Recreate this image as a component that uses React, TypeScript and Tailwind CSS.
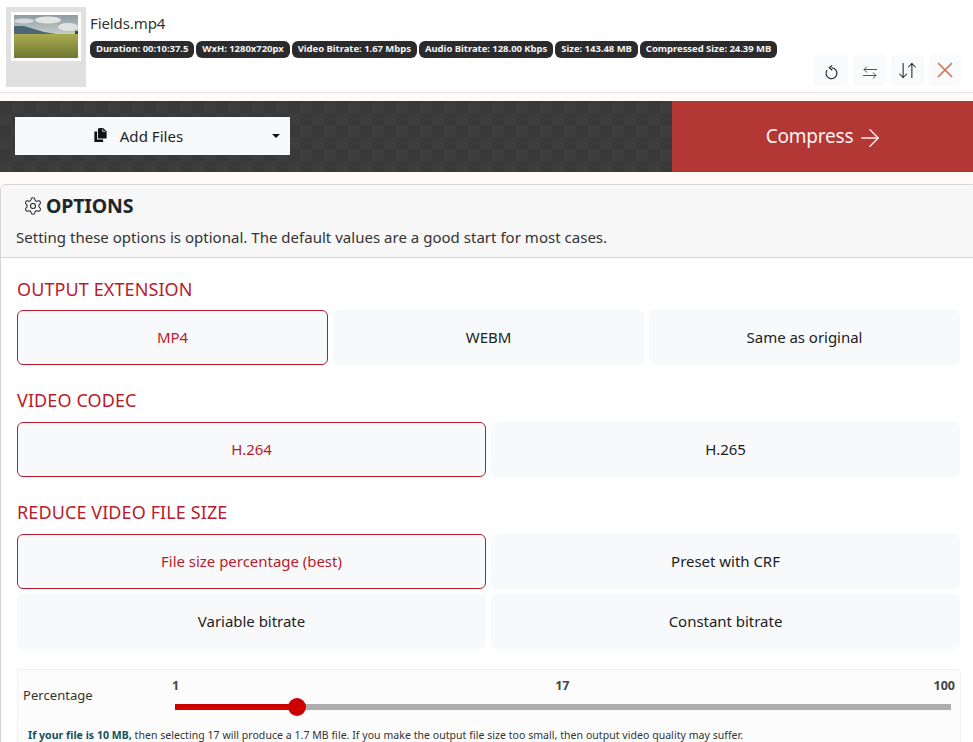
import React from "react";
import { ArrowDownUp, X, ArrowRight, Settings } from "lucide-react";

const font = { fontFamily: '"Noto Sans", "Open Sans", sans-serif' };

function Badge({ children }: { children: React.ReactNode }) {
  return (
    <span className="flex h-[17px] items-center whitespace-nowrap rounded-[6px] bg-[#2b2b2d] px-[6px] text-[9.5px] font-bold tracking-[-0.04px] text-[#f4f4f4]">
      {children}
    </span>
  );
}

function IconBtn({ children, w }: { children: React.ReactNode; w: string }) {
  return <button className={`flex h-[31px] ${w} items-center justify-center rounded-[4px] bg-[#f9fafb]`}>{children}</button>;
}

function Option({ label, active }: { label: string; active?: boolean }) {
  return (
    <div
      className={`flex h-[55px] flex-1 items-center justify-center rounded-[6px] border bg-[#f8f9fa] text-[15px] tracking-[-0.03px] ${
        active ? "border-[#b81c2b] text-[#b81c2b]" : "border-[#f8f9fa] text-[#1d1d1d]"
      }`}
    >
      {label}
    </div>
  );
}

function Heading({ children }: { children: React.ReactNode }) {
  return <div className="text-[18px] leading-[24px] tracking-[0.1px] text-[#b81c2b]">{children}</div>;
}

export default function App() {
  return (
    <div style={font} className="h-[742px] w-[973px] overflow-hidden bg-[#fffaf7] text-[#212529]">
      <div className="flex h-[93px] border-b border-[#e6e4e2] bg-white pl-[6px] pt-[7px]">
        <div className="h-[80px] w-[80px] bg-[#e0e0e0] pl-[5px] pt-[5px]">
          <div className="h-[49px] w-[70px] bg-white p-[3px]">
            <svg viewBox="0 0 64 43" className="block h-[43px] w-[64px]" preserveAspectRatio="none">
              <defs>
                <linearGradient id="sky" x1="0" y1="0" x2="0" y2="1">
                  <stop offset="0" stopColor="#8c9da3" />
                  <stop offset="1" stopColor="#c9cecb" />
                </linearGradient>
                <linearGradient id="field" x1="0" y1="0" x2="0" y2="1">
                  <stop offset="0" stopColor="#abab4f" />
                  <stop offset="1" stopColor="#6e7833" />
                </linearGradient>
              </defs>
              <rect width="64" height="20" fill="url(#sky)" />
              <ellipse cx="34" cy="5" rx="13" ry="3.5" fill="#e3e5e1" />
              <ellipse cx="10" cy="6" rx="10" ry="2.5" fill="#d5d9d7" />
              <ellipse cx="54" cy="12" rx="10" ry="4" fill="#e0e2de" />
              <path d="M0 11 L10 11 L20 14 L30 17 L42 19 L64 19 L64 21 L0 21 Z" fill="#4d6675" />
              <rect x="61" y="16" width="3" height="4" fill="#3f4a36" />
              <rect y="19" width="64" height="24" fill="url(#field)" />
            </svg>
          </div>
        </div>
        <div className="ml-[4px] flex min-w-0 flex-1 flex-col">
          <div className="mt-[4px] text-[15px] leading-[24px] tracking-[-0.1px] text-[#333]">Fields.mp4</div>
          <div className="mt-[6px] flex gap-[2px]">
            <Badge>Duration: 00:10:37.5</Badge>
            <Badge>WxH: 1280x720px</Badge>
            <Badge>Video Bitrate: 1.67 Mbps</Badge>
            <Badge>Audio Bitrate: 128.00 Kbps</Badge>
            <Badge>Size: 143.48 MB</Badge>
            <Badge>Compressed Size: 24.39 MB</Badge>
          </div>
          <div className="mt-[-3px] flex justify-end gap-[5px] pr-[12px]">
            <IconBtn w="w-[34px]">
              <svg viewBox="0 0 16 16" className="mt-[4px] h-[15px] w-[15px]" fill="none" stroke="#222" strokeWidth="1.2">
                <path d="M8 3 A5.8 5.8 0 1 1 3.2 5.5" />
                <path d="M8.8 0.4 L5.6 3 L8.8 5.6" />
              </svg>
            </IconBtn>
            <IconBtn w="w-[33px]">
              <svg viewBox="0 0 14 13" className="mt-[3px] h-[13px] w-[14px]" fill="none" stroke="#555" strokeWidth="1">
                <path d="M4 0.5 L1 3.5 L4 6.5 M1 3.5 H14" />
                <path d="M10 6.5 L13 9.5 L10 12.5 M0 9.5 H13" />
              </svg>
            </IconBtn>
            <IconBtn w="w-[33px]"><ArrowDownUp size={21} strokeWidth={1.2} color="#222" /></IconBtn>
            <IconBtn w="w-[32px]"><X size={26} strokeWidth={1.6} color="#c87a60" className="mt-[-2px]" /></IconBtn>
          </div>
        </div>
      </div>

      <div className="mt-[8px] flex h-[71px]">
        <div className="flex-1 bg-[#3b3b3b] bg-[conic-gradient(#3d3d3d_25%,#393939_0_50%,#3d3d3d_0_75%,#393939_0)] bg-[length:24px_24px] pl-[15px] pt-[16px]">
          <button className="relative flex h-[38px] w-[275px] items-center justify-center bg-[#f8f9fa] pr-[28px] text-[15px] tracking-[0.05px] text-[#212529]">
            <svg viewBox="0 0 14 16" className="mr-[13px] mt-[-2px] h-[14px] w-[13px]" fill="#111">
              <path d="M6 0h4l4 4v8H4V2a2 2 0 0 1 2-2z" />
              <path d="M0 4h3v9h7v3H0z" />
              <path d="M9.5 1v3h3" fill="none" stroke="#fff" strokeWidth="0.8" />
            </svg>
            Add Files
            <span className="absolute right-[10px] top-[17px] h-0 w-0 border-x-[4px] border-t-[4px] border-x-transparent border-t-[#111]" />
          </button>
        </div>
        <div className="flex w-[301px] items-center justify-center bg-[#b23735] pl-[5px] text-[19px] tracking-[-0.2px] text-[#fdf3f2]">
          Compress
          <ArrowRight size={28} strokeWidth={1.15} className="ml-[3px] mt-[2px]" />
        </div>
      </div>

      <div className="mt-[12px] w-[977px] rounded-t-[6px] border border-[#d5d5d5] bg-white">
        <div className="h-[73px] rounded-t-[6px] border-b border-[#d5d5d5] bg-[#f7f7f7] pl-[15px]">
          <div className="flex items-center pl-[7px] pt-[8px] text-[19.5px] font-bold leading-[26px] tracking-[-0.15px] text-[#212529]">
            <Settings size={20} strokeWidth={1.25} className="mr-[3px]" />
            OPTIONS
          </div>
          <div className="mt-[8px] text-[15px] leading-[20px] tracking-[0.02px] text-[#333]">
            Setting these options is optional. The default values are a good start for most cases.
          </div>
        </div>

        <div className="px-[16px]">
          <div className="pt-[19px]">
            <Heading>OUTPUT EXTENSION</Heading>
            <div className="mt-[9px] flex gap-[5px]">
              <Option label="MP4" active />
              <Option label="WEBM" />
              <Option label="Same as original" />
            </div>
          </div>
          <div className="pt-[23px]">
            <Heading>VIDEO CODEC</Heading>
            <div className="mt-[10px] flex gap-[5px]">
              <Option label="H.264" active />
              <Option label="H.265" />
            </div>
          </div>
          <div className="pt-[23px]">
            <Heading>REDUCE VIDEO FILE SIZE</Heading>
            <div className="mt-[10px] grid grid-cols-2 gap-x-[5px] gap-y-[5px]">
              <Option label="File size percentage (best)" active />
              <Option label="Preset with CRF" />
              <Option label="Variable bitrate" />
              <Option label="Constant bitrate" />
            </div>
          </div>

          <div className="mt-[20px] h-[90px] w-[944px] rounded-[4px] border border-[#f0f0f0] bg-[#fcfcfc]">
            <div className="flex">
              <div className="ml-[5px] w-[152px] pt-[15px] text-[13px] leading-[20px] tracking-[0.05px] text-[#333]">Percentage</div>
              <div className="relative mr-[9px] h-[60px] flex-1">
                <div className="absolute left-[-3px] right-[-4px] top-[8px] flex justify-between text-[12.5px] font-bold leading-[16px] text-[#444]">
                  <span>1</span>
                  <span className="ml-[12px]">17</span>
                  <span>100</span>
                </div>
                <div className="absolute left-0 right-0 top-[34px] h-[6px] bg-[#adadad]" />
                <div className="absolute left-0 top-[34px] h-[6px] w-[122px] bg-[#cc0000]" />
                <div className="absolute left-[113px] top-[28px] h-[18px] w-[18px] rounded-full bg-[#cc0000]" />
              </div>
            </div>
            <div className="ml-[10px] mt-[-3px] text-[10.5px] leading-[16px] tracking-[0.05px] text-[#333]">
              <b className="text-[#12505a]">If your file is 10 MB,</b> then selecting 17 will produce a 1.7 MB file. If you make the output file size too small, then output video quality may suffer.
            </div>
          </div>
        </div>
      </div>
    </div>
  );
}
